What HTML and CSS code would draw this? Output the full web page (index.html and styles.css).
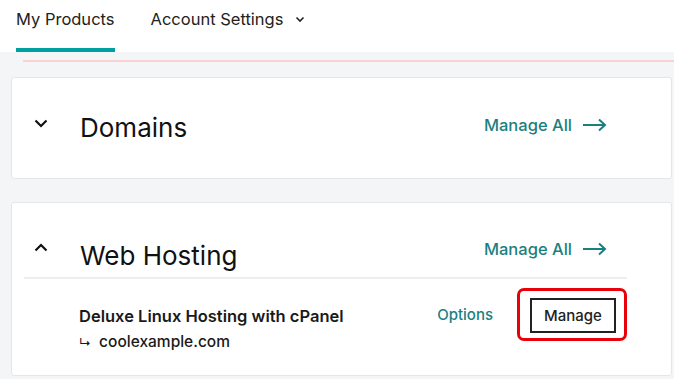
FILE: index.html
```html
<!DOCTYPE html>
<html lang="en">
<head>
  <meta charset="UTF-8">
  <meta name="viewport" content="width=device-width, initial-scale=1.0">
  <title>My Products</title>
  <link rel="stylesheet" href="styles.css">
</head>
<body>
  <!-- Top navigation -->
  <nav class="topnav">
    <a class="tab active" href="#">My Products</a>
    <a class="tab" href="#">Account Settings
      <svg class="caret" width="10" height="7" viewBox="0 0 10 7"><path d="M1.5 1.5 L5 5 L8.5 1.5" fill="none" stroke="#222" stroke-width="1.6"/></svg>
    </a>
  </nav>

  <main class="content">
    <div class="notice-line"></div>

    <!-- Domains -->
    <section class="card">
      <div class="card-head">
        <svg class="chevron" width="14" height="9" viewBox="0 0 14 9"><path d="M1.5 1.5 L7 7 L12.5 1.5" fill="none" stroke="#111" stroke-width="2.2"/></svg>
        <h2>Domains</h2>
        <a class="manage-all" href="#">Manage All
          <svg width="25" height="14" viewBox="0 0 25 14"><path d="M1 7 H23 M17 1.5 L23 7 L17 12.5" fill="none" stroke="#1b7f80" stroke-width="2"/></svg>
        </a>
      </div>
    </section>

    <!-- Web Hosting -->
    <section class="card">
      <div class="card-head open">
        <svg class="chevron" width="14" height="9" viewBox="0 0 14 9"><path d="M1.5 7.5 L7 2 L12.5 7.5" fill="none" stroke="#111" stroke-width="2.2"/></svg>
        <h2>Web Hosting</h2>
        <a class="manage-all" href="#">Manage All
          <svg width="25" height="14" viewBox="0 0 25 14"><path d="M1 7 H23 M17 1.5 L23 7 L17 12.5" fill="none" stroke="#1b7f80" stroke-width="2"/></svg>
        </a>
      </div>
      <div class="product">
        <div class="product-info">
          <p class="product-name">Deluxe Linux Hosting with cPanel</p>
          <p class="product-domain"><span class="hook">↳</span> coolexample.com</p>
        </div>
        <a class="options" href="#">Options</a>
        <div class="highlight">
          <button class="manage-btn">Manage</button>
        </div>
      </div>
    </section>
  </main>
</body>
</html>
```

FILE: styles.css
```css
* {
  margin: 0;
  padding: 0;
  box-sizing: border-box;
  font-family: 'Inter', 'Liberation Sans', sans-serif;
}

body {
  background: #f4f5f7;
  color: #111;
}

a {
  text-decoration: none;
}

.topnav {
  background: #fff;
  height: 52px;
  display: flex;
  gap: 36px;
  padding-left: 16px;
}

.tab {
  color: #222;
  font-size: 16.5px;
  line-height: 38px;
  height: 52px;
  border-bottom: 4px solid transparent;
  display: flex;
  align-items: flex-start;
  gap: 12px;
}

.tab.active {
  border-bottom-color: #00a0a2;
}

.caret {
  margin-top: 16px;
}

.content {
  padding: 8px 2px 0 11px;
}

.notice-line {
  height: 2px;
  background: #f8d3d2;
  margin-left: 12px;
  margin-right: -2px;
  margin-bottom: 15px;
}

.card {
  background: #fff;
  border: 1px solid #e4e6ea;
  border-radius: 3px;
  margin-bottom: 23px;
}

.card:last-child {
  margin-bottom: 0;
}

.card-head {
  display: flex;
  align-items: center;
  height: 100px;
  padding: 0 64px 6px 22px;
}

.card-head.open {
  height: 76px;
  padding-top: 18px;
  padding-bottom: 0;
  margin: 0 44px 0 12px;
  padding-left: 10px;
  padding-right: 20px;
  border-bottom: 2px solid #eceef0;
}

.chevron {
  margin-right: 32px;
  margin-top: -3px;
}

.card-head h2 {
  font-size: 26px;
  font-weight: 400;
  flex: 1;
  margin-top: 4px;
}

.card-head.open h2 {
  margin-top: 12px;
}

.manage-all {
  color: #1b7f80;
  font-size: 16.5px;
  font-weight: 500;
  display: flex;
  align-items: center;
  gap: 10px;
}

.product {
  display: flex;
  padding: 9px 44px 0 67px;
  height: 96px;
  align-items: flex-start;
}

.product-info {
  flex: 1;
  padding-top: 18px;
}

.product-name {
  font-size: 16.5px;
  font-weight: 600;
  color: #1a1a1a;
}

.product-domain {
  font-size: 15.5px;
  font-weight: 500;
  margin-top: 6px;
  color: #1a1a1a;
}

.hook {
  font-size: 12px;
  margin-right: 4px;
}

.options {
  color: #1b7f80;
  font-size: 15px;
  font-weight: 500;
  margin-top: 17px;
  margin-right: 24px;
}

.highlight {
  border: 3px solid #e8000b;
  border-radius: 7px;
  padding: 7px 8px 5px 10px;
}

.manage-btn {
  background: #fff;
  border: 2px solid #222;
  width: 86px;
  height: 35px;
  font-size: 15px;
  font-weight: 500;
  color: #222;
}
```
